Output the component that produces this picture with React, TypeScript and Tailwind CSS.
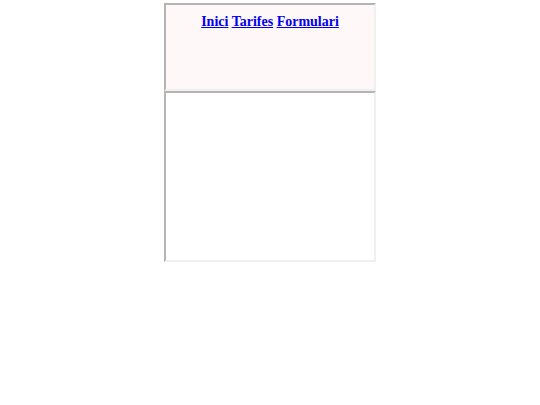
export default function App() {
  const frame =
    "w-[212px] border-2 border-t-[#b4b4b4] border-l-[#b4b4b4] border-r-[#f0f0f0] border-b-[#f0f0f0]";

  return (
    <div className="min-h-[405px] bg-white pt-[3px] font-['Liberation_Serif',serif]">
      <div className="mx-auto flex w-[212px] flex-col">
        <div className={`${frame} h-[88px] bg-[#fff8f8]`}>
          <div className="pt-[8px] text-center text-[14px] font-bold leading-[17px]">
            <a href="#" className="text-[#0000ee] underline">
              Inici
            </a>{" "}
            <a href="#" className="text-[#0000ee] underline">
              Tarifes
            </a>{" "}
            <a href="#" className="text-[#0000ee] underline">
              Formulari
            </a>
          </div>
        </div>
        <div className={`${frame} h-[171px] bg-white`}></div>
      </div>
    </div>
  );
}
